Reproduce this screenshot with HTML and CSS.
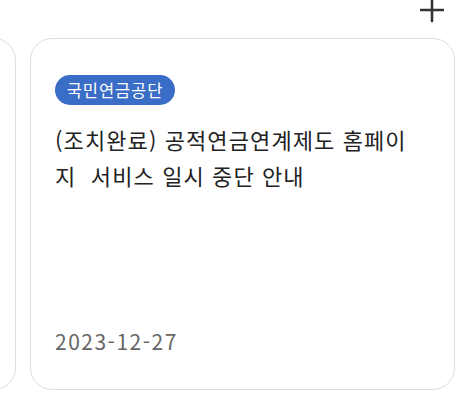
FILE: index.html
```html
<!DOCTYPE html>
<html lang="ko">
<head>
<meta charset="utf-8">
<link rel="stylesheet" href="styles.css">
</head>
<body>
<div class="top">
  <button class="add" aria-label="추가">
    <svg width="24" height="24" viewBox="0 0 24 24"><path d="M12 0V22M1 11H23" stroke="#333" stroke-width="2.6" stroke-linecap="round" fill="none"/></svg>
  </button>
</div>
<div class="track">
  <div class="card"></div>
  <div class="card">
    <span class="badge">국민연금공단</span>
    <p class="title">(조치완료) 공적연금연계제도 홈페이지&nbsp; 서비스 일시 중단 안내</p>
    <span class="date">2023-12-27</span>
  </div>
</div>
</body>
</html>
```
FILE: styles.css
```css
html, body {
  margin: 0;
  padding: 0;
  background: #fff;
  overflow: hidden;
}
body {
  width: 468px;
  height: 407px;
  font-family: "Noto Sans CJK KR", "Noto Sans", sans-serif;
  color: #222;
}
.top {
  height: 38px;
  display: flex;
  justify-content: flex-end;
  align-items: flex-start;
  padding-right: 24px;
}
.add {
  border: 0;
  background: none;
  padding: 0;
  width: 24px;
  height: 24px;
  margin-top: -1px;
}
.add svg { display: block; }
.track {
  display: flex;
  gap: 14px;
  margin-left: -409px;
}
.card {
  flex: 0 0 auto;
  box-sizing: border-box;
  width: 425px;
  height: 352px;
  border: 1px solid #dcdcdc;
  border-radius: 22px;
  padding: 36px 26px 36px 24px;
  display: flex;
  flex-direction: column;
  align-items: flex-start;
}
.badge {
  display: inline-flex;
  align-items: center;
  justify-content: center;
  height: 30px;
  width: 120px;
  box-sizing: border-box;
  border-radius: 15px;
  background: #3a6ec6;
  color: #fff;
  font-size: 16.5px;
  letter-spacing: 0.9px;
  line-height: 1;
}
.title {
  margin: 16px 0 0;
  font-size: 22px;
  letter-spacing: 1.1px;
  line-height: 36px;
  color: #222;
  width: 362px;
}
.date {
  margin-top: auto;
  font-size: 21px;
  letter-spacing: 1.5px;
  line-height: 24px;
  color: #666;
}
```
